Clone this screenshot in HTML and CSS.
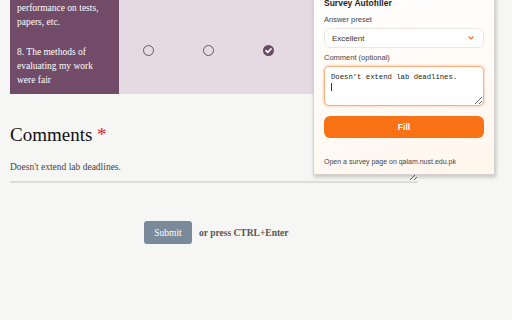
FILE: index.html
```
<!DOCTYPE html>
<html>

<head>
    <meta charset='utf-8'>
    <title>Course Evaluation</title>
    <meta name='viewport' content='width=device-width, initial-scale=1'>
    <link rel="stylesheet" href="styles.css">
</head>

<body>
    <form class="survey-form">
        <div class="survey">
            <div class="question">7. Feedback on my performance on tests, papers, etc.</div>
            <div class="choice"><span class="radio"></span></div>
            <div class="choice"><span class="radio"></span></div>
            <div class="choice"><span class="radio"></span></div>
            <div class="choice"><span class="radio"></span></div>
            <div class="choice"><span class="radio"></span></div>

            <div class="question">8. The methods of evaluating my work were fair</div>
            <div class="choice"><span class="radio"></span></div>
            <div class="choice"><span class="radio"></span></div>
            <div class="choice">
                <svg class="radio-checked" width="11" height="11" viewBox="0 0 11 11">
                    <circle cx="5.5" cy="5.5" r="5.5" fill="#6c4964" />
                    <path d="M3 5.7 L4.7 7.3 L8 3.9" fill="none" stroke="#fff" stroke-width="1.7" stroke-linecap="round" stroke-linejoin="round" />
                </svg>
            </div>
            <div class="choice"><span class="radio"></span></div>
            <div class="choice"><span class="radio"></span></div>
        </div>

        <h2 class="comments-title">Comments <span class="required">*</span></h2>
        <textarea class="comments-box">Doesn't extend lab deadlines.</textarea>

        <div class="submit-row">
            <button type="button" class="submit-btn">Submit</button>
            <span class="submit-hint">or press CTRL+Enter</span>
        </div>
    </form>

    <!-- extension popup lies over the page -->
    <div class="popup">
        <div class="popup-title">Survey Autofiller</div>

        <label class="popup-label" for="preset">Answer preset</label>
        <div class="select-box" id="preset">
            <span class="select-value">Excellent</span>
            <svg width="6" height="4" viewBox="0 0 6 4">
                <polyline points="0.5,0.5 3,3 5.5,0.5" fill="none" stroke="#f97316" stroke-width="1.2" />
            </svg>
        </div>

        <label class="popup-label label-comment" for="comment">Comment (optional)</label>
        <div class="comment-wrap">
            <textarea class="comment-input" id="comment">Doesn't extend lab deadlines.
</textarea>
            <span class="caret"></span>
        </div>

        <button type="button" class="fill-btn">Fill</button>

        <div class="popup-footer">Open a survey page on qalam.nust.edu.pk</div>
    </div>
</body>

</html>
```

FILE: styles.css
```
body {
    margin: 0;
    height: 320px;
    overflow: hidden;
    background-color: #f6f6f4;
    font-family: "Liberation Serif", "Times New Roman", serif;
}

.survey-form {
    width: 408px;
    padding: 0 10px;
}

.survey {
    display: grid;
    grid-template-columns: 109px 59px repeat(4, 60px);
    background-color: #e5d9e2;
    margin-top: -22px;
}

.question {
    background-color: #714b67;
    color: #fff;
    font-size: 9.5px;
    line-height: 14px;
    padding: 9px 7px 7px;
}

.choice {
    display: flex;
    justify-content: center;
    align-items: flex-start;
    padding-top: 9px;
}

.radio {
    width: 9px;
    height: 9px;
    border: 1px solid #6e5468;
    border-radius: 50%;
}

.radio-checked {
    display: block;
}

.comments-title {
    margin: 30px 0 10px;
    font-size: 19px;
    line-height: 22px;
    font-weight: normal;
    color: #111;
}

.required {
    color: #e3262b;
}

.comments-box {
    display: block;
    box-sizing: border-box;
    width: 408px;
    height: 27px;
    margin: 0;
    padding: 4px 0 0;
    border: none;
    border-bottom: 2px solid #dcdcdc;
    background: transparent;
    font-family: "Liberation Serif", serif;
    font-size: 9.5px;
    line-height: 14px;
    color: #444;
    resize: vertical;
    outline: none;
}

.submit-row {
    display: flex;
    align-items: center;
    gap: 7px;
    margin-top: 38px;
    padding-left: 134px;
}

.submit-btn {
    width: 48px;
    height: 23px;
    padding: 0;
    border: none;
    border-radius: 3px;
    background-color: #7b8a99;
    color: #fff;
    font-family: "Liberation Serif", serif;
    font-size: 9.5px;
}

.submit-hint {
    font-size: 9.5px;
    font-weight: bold;
    color: #555;
}

/* popup */
.popup {
    position: absolute;
    left: 313px;
    top: -14px;
    width: 160px;
    padding: 10px 10px 7px;
    background: linear-gradient(160deg, #ffffff 0%, #fffaf5 60%, #fff6ed 100%);
    border: 1px solid #d6d3d0;
    box-shadow: 1px 2px 4px rgba(0, 0, 0, 0.22);
    font-family: "Liberation Sans", Arial, sans-serif;
}

.popup-title {
    font-size: 8.5px;
    line-height: 12px;
    font-weight: bold;
    color: #1d1d1d;
}

.popup-label {
    display: block;
    margin-top: 5.5px;
    font-size: 7.5px;
    line-height: 10px;
    color: #444;
}

.label-comment {
    margin-top: 5px;
}

.select-box {
    box-sizing: border-box;
    display: flex;
    justify-content: space-between;
    align-items: center;
    height: 20px;
    margin-top: 3.5px;
    padding: 0 9px 0 7px;
    background-color: #fff;
    border: 1px solid #ebe7e3;
    border-radius: 6px;
}

.select-value {
    font-size: 8px;
    font-weight: normal;
    color: #333;
}

.comment-wrap {
    position: relative;
    margin-top: 3px;
}

.comment-input {
    display: block;
    box-sizing: border-box;
    width: 160px;
    height: 40px;
    margin: 0;
    padding: 5px 6px;
    border: 1px solid #f6b080;
    border-radius: 5px;
    box-shadow: 0 0 0 1.5px #fde4d2;
    background-color: #fff;
    font-family: "Liberation Mono", "Courier New", monospace;
    font-size: 7.25px;
    line-height: 10px;
    color: #222;
    outline: none;
}

.caret {
    position: absolute;
    left: 7px;
    top: 17px;
    width: 1px;
    height: 8px;
    background-color: #333;
}

.fill-btn {
    display: block;
    width: 160px;
    height: 22px;
    margin-top: 10px;
    padding: 0;
    border: none;
    border-radius: 6px;
    background-color: #f97316;
    color: #fff;
    font-family: "Liberation Sans", Arial, sans-serif;
    font-size: 8.5px;
    font-weight: bold;
}

.popup-footer {
    margin-top: 19px;
    font-size: 7px;
    line-height: 10px;
    color: #444;
}
```
